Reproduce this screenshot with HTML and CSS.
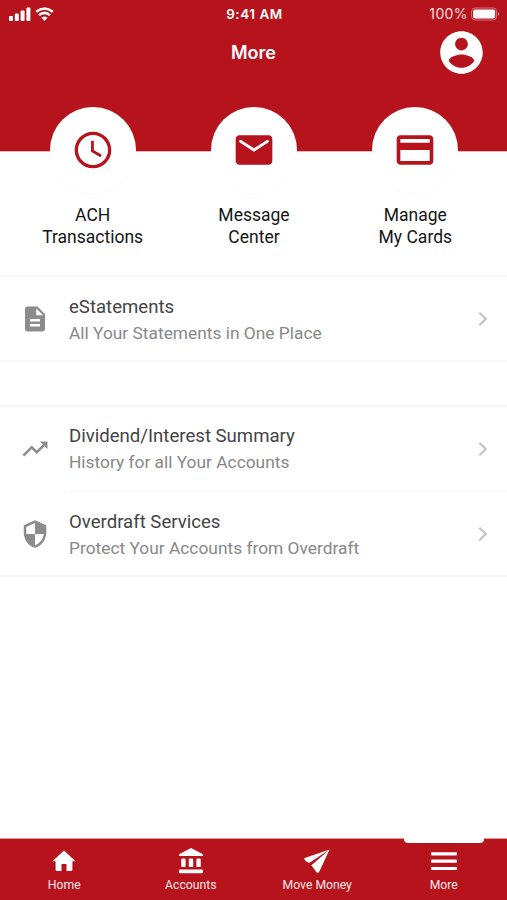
FILE: index.html
```html
<!DOCTYPE html>
<html lang="en">
<head>
<meta charset="utf-8">
<title>More</title>
<link rel="stylesheet" href="styles.css">
</head>
<body>
<div class="app">
  <header class="header">
    <div class="status">
      <div class="signals">
        <svg width="22" height="14" viewBox="0 0 22 14"><rect y="9" width="4" height="5" rx="1"/><rect x="5.8" y="6.5" width="4" height="7.5" rx="1"/><rect x="11.6" y="3.5" width="4" height="10.5" rx="1"/><rect x="17.4" y=".5" width="4" height="13.5" rx="1"/></svg>
        <svg class="wifi" width="19" height="14" viewBox="0 0 19 14"><path d="M1.2 4.700Q9.500-1.800 17.800 4.700M4 8.100Q9.500 3.600 15 8.100" fill="none" stroke="#fff" stroke-width="2.500"/><path d="M6.400 10.700Q9.500 8.300 12.600 10.700L9.500 14z"/></svg>
      </div>
      <div class="time">9:41 AM</div>
      <div class="power">
        <span>100%</span>
        <svg width="29" height="14" viewBox="0 0 31 14"><rect x=".6" y=".6" width="26.8" height="12.8" rx="3.8" fill="none" stroke="#fff" stroke-opacity=".45"/><rect x="2.2" y="2.2" width="23.6" height="9.6" rx="2.2"/><path d="M28.8 4.8q3 2.2 0 4.4z" opacity=".5"/></svg>
      </div>
    </div>
    <div class="titlebar">
      <h1>More</h1>
      <svg class="avatar" viewBox="0 0 24 24"><path d="M12 2C6.480 2 2 6.480 2 12s4.480 10 10 10 10-4.480 10-10S17.520 2 12 2zm0 3c1.660 0 3 1.340 3 3s-1.340 3-3 3-3-1.340-3-3 1.340-3 3-3zm0 14.200c-2.500 0-4.710-1.280-6-3.220.030-1.990 4-3.080 6-3.080s5.970 1.090 6 3.080c-1.290 1.940-3.500 3.220-6 3.220z"/></svg>
    </div>
  </header>

  <nav class="shortcuts">
    <a class="shortcut">
      <span class="disc"><svg viewBox="0 0 24 24"><path d="M11.990 2C6.470 2 2 6.480 2 12s4.470 10 9.990 10C17.520 22 22 17.520 22 12S17.520 2 11.990 2zM12 20.200c-4.500 0-8.200-3.700-8.200-8.200s3.700-8.200 8.200-8.200 8.200 3.700 8.200 8.200-3.700 8.200-8.200 8.200z"/><path d="M11.700 6.900v5.600l4.700 2.800" fill="none" stroke="#b6131d" stroke-width="1.500"/></svg></span>
      <span>ACH<br>Transactions</span>
    </a>
    <a class="shortcut">
      <span class="disc"><svg viewBox="0 0 24 24"><path d="M20 4H4c-1.100 0-2 .9-2 2v12c0 1.100.9 2 2 2h16c1.100 0 2-.9 2-2V6c0-1.100-.9-2-2-2z"/><path d="M4.700 7.300 12 12l7.300-4.700" fill="none" stroke="#fff" stroke-width="1.600" stroke-linecap="round"/></svg></span>
      <span>Message<br>Center</span>
    </a>
    <a class="shortcut">
      <span class="disc"><svg viewBox="0 0 24 24"><path d="M20 4H4c-1.110 0-1.990.89-1.990 2L2 18c0 1.110.89 2 2 2h16c1.110 0 2-.89 2-2V6c0-1.110-.89-2-2-2zm0 14H4v-6h16v6zm0-10H4V6h16v2z"/></svg></span>
      <span>Manage<br>My Cards</span>
    </a>
  </nav>

  <main class="lists">
    <section class="group">
      <a class="row">
        <svg class="icon" viewBox="0 0 24 24"><path d="M14 2H6c-1.100 0-1.990.9-1.990 2L4 20c0 1.100.89 2 1.990 2H18c1.100 0 2-.9 2-2V8l-6-6zm2 16H8v-2h8v2zm0-4H8v-2h8v2zm-3-5V3.500L18.500 9H13z"/></svg>
        <span class="copy"><span class="name">eStatements</span><span class="note">All Your Statements in One Place</span></span>
        <svg class="chevron" viewBox="0 0 10 16"><path d="M1.300 1.700 7.800 8l-6.500 6.300"/></svg>
      </a>
    </section>
    <section class="group">
      <a class="row upper">
        <svg class="icon" viewBox="0 0 24 24"><path d="M16 6l2.290 2.290-4.880 4.880-4-4L2 16.590 3.410 18l6-6 4 4 6.300-6.290L22 12V6z"/></svg>
        <span class="copy"><span class="name">Dividend/Interest Summary</span><span class="note">History for all Your Accounts</span></span>
        <svg class="chevron" viewBox="0 0 10 16"><path d="M1.300 1.700 7.800 8l-6.500 6.300"/></svg>
      </a>
      <div class="divider"></div>
      <a class="row">
        <svg class="icon" viewBox="0 0 24 24"><path d="M12 1 3 5v6c0 5.550 3.840 10.740 9 12 5.160-1.260 9-6.450 9-12V5l-9-4zm0 10.990h7c-.53 4.120-3.280 7.790-7 8.940V12H5V6.300l7-3.110v8.800z"/></svg>
        <span class="copy"><span class="name">Overdraft Services</span><span class="note">Protect Your Accounts from Overdraft</span></span>
        <svg class="chevron" viewBox="0 0 10 16"><path d="M1.300 1.700 7.800 8l-6.500 6.300"/></svg>
      </a>
    </section>
  </main>

  <footer class="tabs">
    <a class="tab"><svg viewBox="0 0 28 28"><path d="M14 3.500 2.500 14.200H5.600V22.800q0 1.200 1.200 1.200H11.500V17h5v7h4.700q1.200 0 1.200-1.200V14.200h3.100z"/></svg><span>Home</span></a>
    <a class="tab"><svg viewBox="0 0 28 28"><path d="M14 1 26 7.200V9H2V7.200z"/><rect x="4.200" y="11.500" width="4.400" height="8.600" rx="1.200"/><rect x="11.800" y="11.500" width="4.400" height="8.600" rx="1.200"/><rect x="19.400" y="11.500" width="4.400" height="8.600" rx="1.200"/><rect x="2" y="22.500" width="24" height="3.800" rx="1"/></svg><span>Accounts</span></a>
    <a class="tab"><svg viewBox="0 0 28 28"><path d="M26.600 2.500 1 11.200q1.400 3.700 5.500 4.500zM26.600 2.500 8.400 18.200l5.700 7.800q1.700-.2 2.500-2z"/></svg><span>Move Money</span></a>
    <a class="tab current"><svg viewBox="0 0 28 28"><rect x="1" y="5.300" width="26" height="3.200" rx="1"/><rect x="1" y="12.600" width="26" height="3.200" rx="1"/><rect x="1" y="19.900" width="26" height="3.200" rx="1"/></svg><span>More</span></a>
  </footer>
</div>
</body>
</html>
```

FILE: styles.css
```css
* { box-sizing: border-box; }

body {
  margin: 0;
  background: #fff;
  font-family: Roboto, "Liberation Sans", sans-serif;
}

svg { display: block; flex: none; fill: currentColor; }

.app { display: flex; flex-direction: column; height: 900px; overflow: hidden; }

.header {
  flex: none;
  height: 152px;
  border-bottom: 1px solid #efb9bd;
  background: #b6131d;
  color: #fff;
}

.status {
  display: grid;
  grid-template-columns: 1fr auto 1fr;
  align-items: center;
  height: 27px;
  padding: 0 7px 0 9px;
  font-family: Inter, sans-serif;
}
.signals { display: flex; gap: 4px; }
.time { font-size: 13.5px; font-weight: 600; letter-spacing: .55px; }
.power { display: flex; justify-content: flex-end; align-items: center; gap: 3px; font-size: 14px; letter-spacing: .4px; }
.power span { opacity: .85; }

.titlebar {
  display: grid;
  grid-template-columns: 1fr auto 1fr;
  align-items: center;
  height: 51px;
  padding-right: 20px;
}
.titlebar h1 {
  grid-column: 2;
  margin: 0 0 0 20px;
  font: 600 18px/24px Inter, sans-serif;
}
.avatar { width: 51px; height: 51px; justify-self: end; }

.shortcuts { display: flex; flex: none; height: 168px; margin-top: -45px; padding: 0 11px 0 12px; }
.shortcut {
  flex: 1;
  display: flex;
  flex-direction: column;
  align-items: center;
  gap: 11px;
  text-align: center;
  color: #151515;
  font-size: 17.5px;
  line-height: 22px;
}
.disc {
  display: flex;
  align-items: center;
  justify-content: center;
  width: 86px;
  height: 86px;
  border-radius: 50%;
  background: #fff;
  color: #b6131d;
  box-shadow: 0 1px 3px rgba(0, 0, 0, .02);
}
.disc svg { width: 44px; height: 44px; }

.lists { flex: 1; display: flex; flex-direction: column; gap: 43px; }
.group { border: solid #f7f7f7; border-width: 2px 0; }
.row { display: flex; align-items: center; height: 83px; padding: 0 19px 0 20px; }
.icon { width: 30px; height: 30px; color: #8c8c8c; }
.copy {
  display: flex;
  flex: 1;
  flex-direction: column;
  justify-content: center;
  height: 100%;
  padding-top: 3px;
  margin-left: 19px;
}
.upper .copy { padding-top: 1px; }
.divider { height: 2px; margin-left: 69px; background: #fafafa; }
.name, .note { line-height: 26px; white-space: nowrap; }
.name { color: #444; font-size: 18.6px; }
.note { color: #888; font-size: 17.35px; }
.chevron { width: 10px; height: 16px; fill: none; stroke: #c4c4c4; stroke-width: 2.2; }

.tabs {
  display: flex;
  flex: none;
  height: 62px;
  padding-left: 1px;
  border-top: 1px solid #e3959a;
  background: #b6131d;
  color: #fff;
}
.tab {
  position: relative;
  flex: 1;
  display: flex;
  flex-direction: column;
  align-items: center;
  padding-top: 8px;
  font-size: 12.2px;
  line-height: 16px;
}
.tab svg { width: 28px; height: 28px; margin-bottom: 2px; }
.tab span { opacity: .9; }
.current::before {
  content: "";
  position: absolute;
  top: -1px;
  left: 23px;
  width: 80px;
  height: 5px;
  border-radius: 0 0 4px 4px;
  background: #fff;
}
```
